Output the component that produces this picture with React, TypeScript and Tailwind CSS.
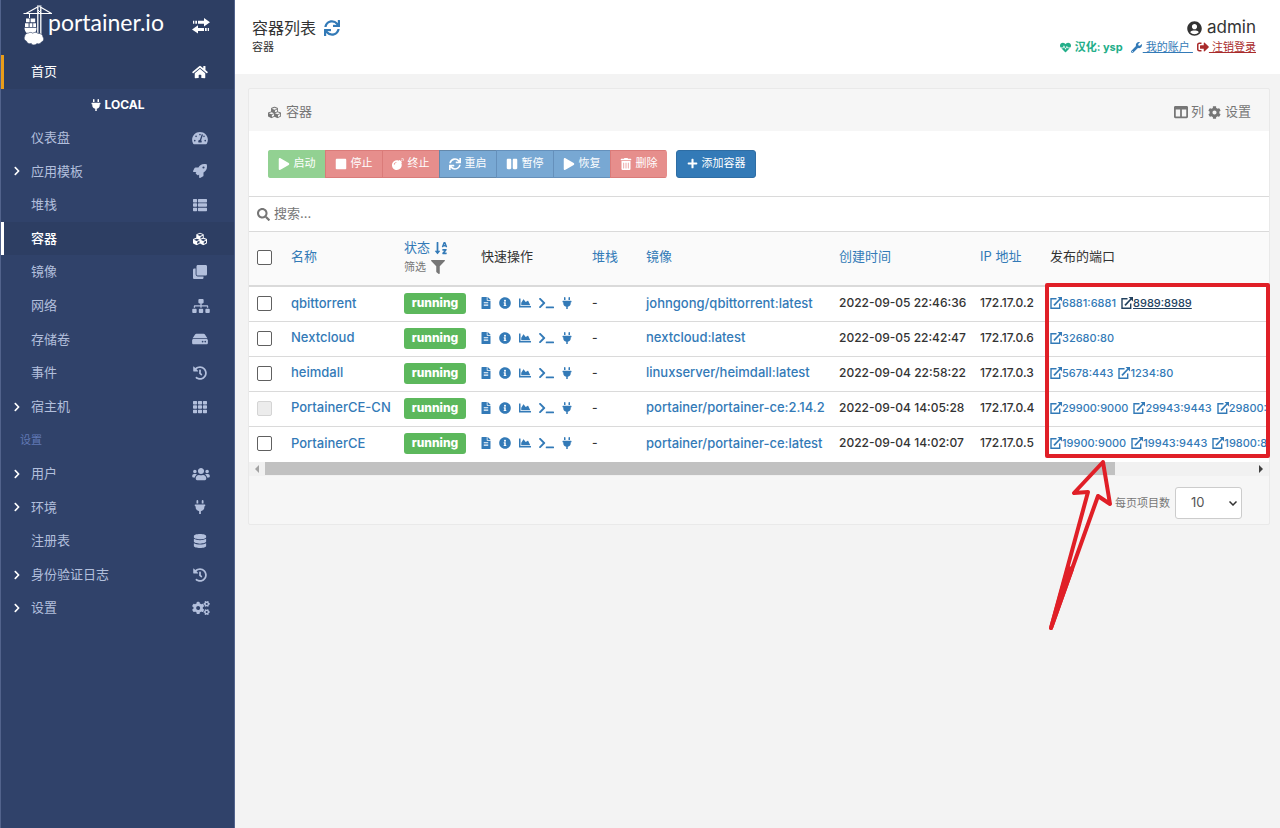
import { useState } from "react";
import type { ReactNode } from "react";
import type { IconType } from "react-icons";
import {
  FaBomb,
  FaChartArea,
  FaChevronRight,
  FaClone,
  FaCog,
  FaCogs,
  FaColumns,
  FaCubes,
  FaDatabase,
  FaFileAlt,
  FaFilter,
  FaHdd,
  FaHeartbeat,
  FaHistory,
  FaHome,
  FaInfoCircle,
  FaPause,
  FaPlay,
  FaPlug,
  FaPlus,
  FaRocket,
  FaSearch,
  FaSignOutAlt,
  FaSitemap,
  FaSortAlphaDown,
  FaStop,
  FaSync,
  FaTachometerAlt,
  FaTerminal,
  FaTh,
  FaThList,
  FaTrashAlt,
  FaUserCircle,
  FaUsers,
  FaWrench,
} from "react-icons/fa";

type MenuItem = {
  label: string;
  icon: IconType;
  expandable?: boolean;
  active?: boolean;
  wide?: boolean;
};

const endpointMenu: MenuItem[] = [
  { label: "仪表盘", icon: FaTachometerAlt },
  { label: "应用模板", icon: FaRocket, expandable: true },
  { label: "堆栈", icon: FaThList },
  { label: "容器", icon: FaCubes, active: true },
  { label: "镜像", icon: FaClone },
  { label: "网络", icon: FaSitemap, wide: true },
  { label: "存储卷", icon: FaHdd },
  { label: "事件", icon: FaHistory },
  { label: "宿主机", icon: FaTh, expandable: true },
];

const settingsMenu: MenuItem[] = [
  { label: "用户", icon: FaUsers, expandable: true, wide: true },
  { label: "环境", icon: FaPlug, expandable: true },
  { label: "注册表", icon: FaDatabase },
  { label: "身份验证日志", icon: FaHistory, expandable: true },
  { label: "设置", icon: FaCogs, expandable: true, wide: true },
];

type Container = {
  name: string;
  image: string;
  created: string;
  ip: string;
  ports: string[];
  locked?: boolean;
  focusPort?: string;
};

const containers: Container[] = [
  {
    name: "qbittorrent",
    image: "johngong/qbittorrent:latest",
    created: "2022-09-05 22:46:36",
    ip: "172.17.0.2",
    ports: ["6881:6881", "8989:8989"],
    focusPort: "8989:8989",
  },
  {
    name: "Nextcloud",
    image: "nextcloud:latest",
    created: "2022-09-05 22:42:47",
    ip: "172.17.0.6",
    ports: ["32680:80"],
  },
  {
    name: "heimdall",
    image: "linuxserver/heimdall:latest",
    created: "2022-09-04 22:58:22",
    ip: "172.17.0.3",
    ports: ["5678:443", "1234:80"],
  },
  {
    name: "PortainerCE-CN",
    image: "portainer/portainer-ce:2.14.2",
    created: "2022-09-04 14:05:28",
    ip: "172.17.0.4",
    ports: ["29900:9000", "29943:9443", "29800:8000"],
    locked: true,
  },
  {
    name: "PortainerCE",
    image: "portainer/portainer-ce:latest",
    created: "2022-09-04 14:02:07",
    ip: "172.17.0.5",
    ports: ["19900:9000", "19943:9443", "19800:8000"],
  },
];

const actions: { label: string; icon: IconType; tone: string }[] = [
  { label: "启动", icon: FaPlay, tone: "bg-[#92d192] border-[#92d192]" },
  { label: "停止", icon: FaStop, tone: "bg-[#e68e8c] border-[#da7b79]" },
  { label: "终止", icon: FaBomb, tone: "bg-[#e68e8c] border-[#da7b79]" },
  { label: "重启", icon: FaSync, tone: "bg-[#78a8d3] border-[#6488aa]" },
  { label: "暂停", icon: FaPause, tone: "bg-[#78a8d3] border-[#6590bb]" },
  { label: "恢复", icon: FaPlay, tone: "bg-[#78a8d3] border-[#6590bb]" },
  { label: "删除", icon: FaTrashAlt, tone: "bg-[#e68e8c] border-[#da7b79]" },
];

const quickActions: { label: string; icon: IconType; size: string }[] = [
  { label: "Logs", icon: FaFileAlt, size: "h-3 w-[10px]" },
  { label: "Inspect", icon: FaInfoCircle, size: "h-3 w-3" },
  { label: "Stats", icon: FaChartArea, size: "h-3 w-3" },
  { label: "Console", icon: FaTerminal, size: "h-3 w-[15px]" },
  { label: "Attach", icon: FaPlug, size: "h-3 w-[10px]" },
];

function CraneLogo() {
  return (
    <svg viewBox="0 0 30 41" className="h-[41px] w-[30px] shrink-0" aria-hidden="true">
      <g fill="none" stroke="#fff">
        <path d="M0.500 8.500H29M15.500 1.500L3 8.500M16.500 1.500L28.500 8.500" strokeWidth="1.200" />
        <path d="M14.800 2V29M17.800 2V32" strokeWidth="1.300" />
        <path d="M14 1H18.500M15 5L18 8M18 5L15 8M6.500 8.500V13" strokeWidth="1" />
      </g>
      <path
        fill="#fff"
        d="M3 13.500h3.600v3.800H3zM7.600 13.500h4.600v3.800H7.600zM2 18.200h3.600V22H2zM6.600 18.200h2.800V22H6.600zM10.200 18.200h2.800V22h-2.800zM1.500 22.700h12c0 3-.8 4.500-2 5.500H4c-1.500-1-2.500-3-2.500-5.500z"
      />
      <path
        fill="#fff"
        stroke="#2d3e63"
        strokeWidth=".6"
        d="M5.500 28c1.500-1 3.500-.6 4.300.2 1.300-1.200 4-1.200 5.200.2 2.600-.3 4.900 1.400 5 3.700 1.400 1.900.5 4.400-1.800 5.100-.9 1.700-2.900 2-4.200 1.400-1.500 1.900-4.700 1.800-5.800-.2-2 .8-4.400-.3-4.700-2.200-2.200-.7-3-3-1.800-4.900 0-1.800 1.800-3.400 3.800-3.300z"
      />
    </svg>
  );
}

function ToggleArrows() {
  return (
    <svg viewBox="0 0 18 16" className="h-4 w-[18px]" fill="#fff" aria-hidden="true">
      <path d="M12 0l6 4.200-6 4.200V5.800H6V2.700h6zM1 2.700h1.300v3.100H1zM3.300 2.700h1.700v3.100H3.300z" />
      <path d="M6 7.200L0 11.400l6 4.200V13h6V9.900H6zM13 9.900h1.700V13H13zM15.700 9.900H17V13h-1.300z" />
    </svg>
  );
}

function ExternalLink() {
  return (
    <svg
      viewBox="0 0 12 12"
      className="size-3 shrink-0"
      fill="none"
      stroke="currentColor"
      strokeWidth="1.400"
      aria-hidden="true"
    >
      <path d="M6.500 1.700H1V11.200H9.700V6.500" />
      <path d="M4 8.300L10.500 1.500" strokeWidth="1.700" />
      <path d="M7.600 0H12V4.400z" fill="currentColor" stroke="none" />
    </svg>
  );
}

function SidebarRow({ item }: { item: MenuItem }) {
  const Icon = item.icon;
  return (
    <li className="flex flex-1">
      <a
        href="#"
        className={
          "flex flex-1 items-center border-l-3 pl-2 " +
          (item.active
            ? "border-white bg-[#2d3e63] font-medium text-white"
            : "border-transparent text-[#b2bfdc]")
        }
      >
        <span className="flex w-[19px] shrink-0 text-white">
          {item.expandable && <FaChevronRight className="size-[10px]" />}
        </span>
        <span className="flex-1">{item.label}</span>
        <span className="flex w-[42px] shrink-0">
          <Icon className={item.wide ? "h-[14px] w-[18px]" : "h-[14px] w-4"} />
        </span>
      </a>
    </li>
  );
}

function Sidebar() {
  return (
    <aside className="flex w-[235px] shrink-0 flex-col border-x border-[#52638c] bg-[#30426a] text-[13px]">
      <div className="flex h-[55px] items-start bg-[#2d3e63] pt-[5px] pl-[22px]">
        <a href="#" className="flex flex-1 items-start text-white">
          <CraneLogo />
          <span className="-ml-[5px] pt-[5px] font-['Lato'] text-[23px] leading-6">portainer.io</span>
        </a>
        <button type="button" aria-label="Toggle sidebar" className="flex w-[42px] shrink-0 pt-[13px]">
          <ToggleArrows />
        </button>
      </div>
      <a
        href="#"
        className="flex h-[34px] items-center border-l-3 border-[#e99d1a] bg-[#2d3e63] pl-[27px] text-white"
      >
        <span className="flex-1">首页</span>
        <span className="flex w-[42px] shrink-0">
          <FaHome className="h-[14px] w-4" />
        </span>
      </a>
      <div className="flex h-8 items-center justify-center gap-1 text-[12px] font-bold text-white">
        <FaPlug className="h-3 w-[10px]" />
        LOCAL
      </div>
      <ul className="flex h-[504px] flex-col">
        {endpointMenu.map((item) => (
          <SidebarRow key={item.label} item={item} />
        ))}
        <li className="flex flex-1 items-center pl-[19px] text-[11px] text-[#6179b5]">设置</li>
        {settingsMenu.map((item) => (
          <SidebarRow key={item.label} item={item} />
        ))}
      </ul>
    </aside>
  );
}

function PageHeader() {
  return (
    <header className="flex h-[74px] justify-between bg-white pt-4 pr-6 pl-[17px]">
      <div>
        <h1 className="flex h-6 items-center gap-2 text-[16px]">
          容器列表
          <button type="button" aria-label="Refresh" className="text-[#337ab7]">
            <FaSync className="size-4" />
          </button>
        </h1>
        <div className="text-[11px] leading-[14px]">容器</div>
      </div>
      <div className="flex flex-col items-end">
        <div className="flex h-6 items-center gap-[5px] text-[17px]">
          <FaUserCircle className="size-[15px]" />
          admin
        </div>
        <div className="flex items-center gap-2 text-[11px] leading-[14px]">
          <span className="flex items-center gap-1 font-bold text-[#23ae89]">
            <FaHeartbeat className="size-[11px]" />
            汉化: ysp
          </span>
          <a href="#" className="flex items-center gap-px text-[#337ab7]">
            <FaWrench className="size-[11px]" />
            <span className="whitespace-pre underline"> 我的账户 </span>
          </a>
          <a href="#" className="-ml-1 flex items-center text-[#a92b2b]">
            <FaSignOutAlt className="size-3" />
            <span className="whitespace-pre underline"> 注销登录</span>
          </a>
        </div>
      </div>
    </header>
  );
}

function Toolbar() {
  return (
    <div className="flex h-[66px] items-center gap-[9px] border-b border-[#dadada] bg-white px-[19px] text-[11px] text-white">
      <div className="flex overflow-hidden rounded-[3px]">
        {actions.map(({ label, icon: Icon, tone }) => (
          <button
            key={label}
            type="button"
            disabled
            className={"flex h-7 w-[57px] items-center justify-center gap-1 border border-r-0 pr-px " + tone}
          >
            <Icon className="size-3" />
            {label}
          </button>
        ))}
      </div>
      <button
        type="button"
        className="flex h-7 w-20 items-center justify-center gap-1 rounded-[3px] border border-[#2e6da4] bg-[#337ab7]"
      >
        <FaPlus className="size-[11px]" />
        添加容器
      </button>
    </div>
  );
}

function Checkbox({ label, disabled }: { label: string; disabled?: boolean }) {
  return (
    <input
      type="checkbox"
      aria-label={label}
      disabled={disabled}
      className="block size-[15px] appearance-none rounded-[2px] border border-[#606060] bg-white checked:bg-[#337ab7] disabled:border-[#d4d4d4] disabled:bg-[#ececec]"
    />
  );
}

function HeadLink({ children }: { children: ReactNode }) {
  return (
    <a href="#" className="text-[#337ab7]">
      {children}
    </a>
  );
}

function ContainerTable() {
  return (
    <div className="overflow-hidden bg-white pb-px">
      <table className="w-full min-w-[1186px] table-fixed border-collapse text-left text-[13px] whitespace-nowrap">
        <colgroup>
          <col className="w-[34px]" />
          <col className="w-[113px]" />
          <col className="w-[77px]" />
          <col className="w-[111px]" />
          <col className="w-[54px]" />
          <col className="w-[193px]" />
          <col className="w-[141px]" />
          <col className="w-[70px]" />
          <col />
        </colgroup>
        <thead>
          <tr className="h-[54px] border-b-2 border-[#dadada] bg-[#fafafa] [&>th]:px-2 [&>th]:pb-[3px] [&>th]:font-normal">
            <th>
              <Checkbox label="Select all" />
            </th>
            <th>
              <HeadLink>名称</HeadLink>
            </th>
            <th>
              <a href="#" className="flex h-5 items-center gap-1 text-[#337ab7]">
                状态
                <FaSortAlphaDown className="size-[14px]" />
              </a>
              <button type="button" className="flex h-[18px] items-center gap-[5px] text-[11px] text-[#767676]">
                筛选
                <FaFilter className="size-[14px]" />
              </button>
            </th>
            <th>快速操作</th>
            <th>
              <HeadLink>堆栈</HeadLink>
            </th>
            <th>
              <HeadLink>镜像</HeadLink>
            </th>
            <th>
              <HeadLink>创建时间</HeadLink>
            </th>
            <th>
              <HeadLink>IP 地址</HeadLink>
            </th>
            <th>发布的端口</th>
          </tr>
        </thead>
        <tbody className="text-[12px] font-medium">
          {containers.map((c) => (
            <tr
              key={c.name}
              className="h-[35px] border-b border-[#dadada] last:border-b-0 [&>td]:px-2 [&>td]:pb-px"
            >
              <td>
                <Checkbox label={"Select " + c.name} disabled={c.locked} />
              </td>
              <td className="text-[13px]">
                <HeadLink>{c.name}</HeadLink>
              </td>
              <td>
                <span className="flex h-[21px] w-[62px] items-center justify-center rounded-[3px] bg-[#5cb85c] text-[12px] font-extrabold text-white">
                  running
                </span>
              </td>
              <td>
                <div className="flex items-center gap-2 text-[#337ab7]">
                  {quickActions.map(({ label, icon: Icon, size }) => (
                    <a key={label} href="#" aria-label={label}>
                      <Icon className={size} />
                    </a>
                  ))}
                </div>
              </td>
              <td>-</td>
              <td className="text-[13px]">
                <HeadLink>{c.image}</HeadLink>
              </td>
              <td>{c.created}</td>
              <td>{c.ip}</td>
              <td className="text-[11px]">
                <div className="flex items-center gap-[5px]">
                  {c.ports.map((port) => (
                    <a
                      key={port}
                      href="#"
                      className={
                        "flex items-center " +
                        (port === c.focusPort ? "text-[#23425f] underline" : "text-[#337ab7]")
                      }
                    >
                      <ExternalLink />
                      {port}
                    </a>
                  ))}
                </div>
              </td>
            </tr>
          ))}
        </tbody>
      </table>
    </div>
  );
}

function HorizontalScrollbar() {
  return (
    <div className="flex h-[14px] bg-[#f1f1f1]">
      <button type="button" aria-label="Scroll left" className="flex w-4 items-center justify-center">
        <svg viewBox="0 0 4 8" className="h-2 w-1" fill="#a3a3a3">
          <path d="M4 0v8L0 4z" />
        </svg>
      </button>
      <div className="flex-1">
        <div className="h-[13px] w-[86%] bg-[#c1c1c1]" />
      </div>
      <button type="button" aria-label="Scroll right" className="flex w-4 items-center justify-center">
        <svg viewBox="0 0 4 8" className="h-2 w-1" fill="#404040">
          <path d="M0 0v8l4-4z" />
        </svg>
      </button>
    </div>
  );
}

function Annotation() {
  return (
    <svg
      viewBox="0 0 240 360"
      className="pointer-events-none absolute top-[190px] left-[791px] h-[360px] w-[240px]"
      fill="none"
      stroke="#e01f27"
      strokeWidth="4"
      strokeLinejoin="round"
      strokeLinecap="round"
      aria-hidden="true"
    >
      <rect x="7" y="6" width="221" height="171" />
      <path d="M63 183L34 214L48 213L11 349L58 217L70 225Z" />
      <path d="M28 289L11 349L32 290Z" fill="#e01f27" />
    </svg>
  );
}

export default function App() {
  const [query, setQuery] = useState("");
  return (
    <div className="flex min-h-screen bg-[#f3f3f3] font-['Inter','Noto_Sans_CJK_SC',sans-serif] text-[#333333]">
      <Sidebar />
      <div className="flex min-w-0 flex-1 flex-col">
        <PageHeader />
        <main className="pt-[14px] pr-[10px] pl-[13px]">
          <section className="relative rounded-[2px] border border-[#e9e9e9] bg-[#f6f6f6]">
            <div className="flex h-[42px] items-center justify-between px-[18px] pt-1 text-[13px] text-[#767676]">
              <h2 className="flex items-center gap-1">
                <FaCubes className="h-[13px] w-[15px]" />
                容器
              </h2>
              <div className="flex items-center gap-1">
                <button type="button" className="flex items-center gap-[3px]">
                  <FaColumns className="size-[14px]" />列
                </button>
                <button type="button" className="flex items-center gap-1">
                  <FaCog className="size-[13px]" />
                  设置
                </button>
              </div>
            </div>
            <Toolbar />
            <label className="flex h-[35px] items-center gap-1 border-b border-[#dadada] bg-white px-2 text-[#767676]">
              <FaSearch className="size-[13px]" />
              <input
                type="text"
                aria-label="搜索"
                placeholder="搜索..."
                value={query}
                onChange={(e) => setQuery(e.target.value)}
                className="flex-1 text-[13px] outline-none placeholder:text-[#767676]"
              />
            </label>
            <ContainerTable />
            <HorizontalScrollbar />
            <div className="flex h-12 items-center justify-end gap-[5px] pt-[6px] pr-[27px] text-[#767676]">
              <label htmlFor="page-size" className="text-[11px]">
                每页项目数
              </label>
              <span className="relative flex">
                <select
                  id="page-size"
                  defaultValue="10"
                  className="h-8 w-[67px] appearance-none rounded-[3px] border border-[#cccccc] bg-white pl-[15px] text-[13px] text-[#555555]"
                >
                  <option>10</option>
                  <option>25</option>
                  <option>50</option>
                  <option>100</option>
                </select>
                <svg
                  viewBox="0 0 8 5"
                  className="pointer-events-none absolute top-[14px] right-[5px] h-[5px] w-2"
                  fill="none"
                  stroke="#333333"
                  strokeWidth="1.500"
                  aria-hidden="true"
                >
                  <path d="M0.500 0.500L4 4L7.500 0.500" />
                </svg>
              </span>
            </div>
            <Annotation />
          </section>
        </main>
      </div>
    </div>
  );
}
